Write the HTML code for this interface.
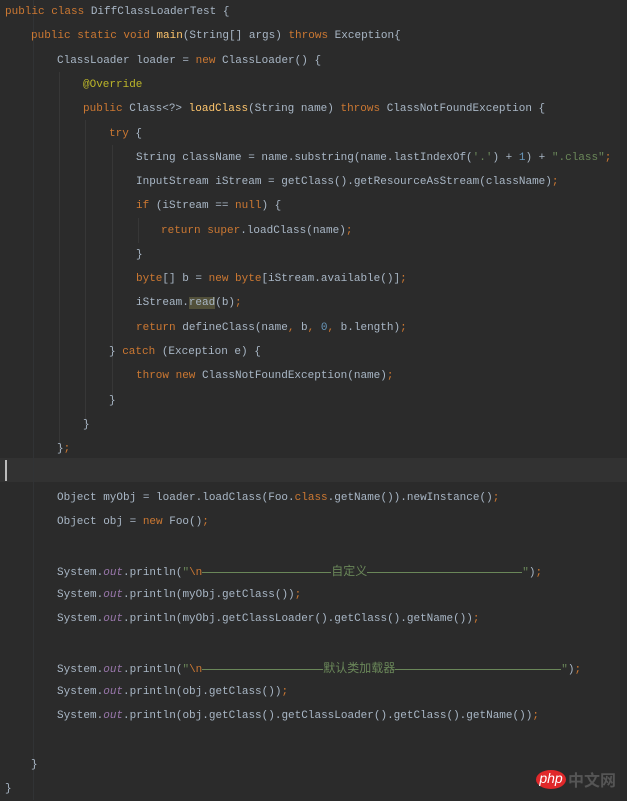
<!DOCTYPE html>
<html><head><meta charset="utf-8"><style>
html,body{margin:0;padding:0}
body{width:627px;height:800px;background:#2b2b2b;position:relative;overflow:hidden;font-family:"Liberation Mono","Noto Sans CJK SC",monospace;font-size:11px;color:#a9b7c6}
.l{position:absolute;left:5px;height:24px;line-height:24px;white-space:pre}
.k{color:#cc7832}.m{color:#ffc66d}.a{color:#bbb529}.s{color:#6a8759}.n{color:#6897bb}.o{color:#9876aa;font-style:italic}
.cur{position:absolute;left:0;top:458px;width:627px;height:24px;background:#323232}
.caret{position:absolute;left:5px;top:460px;width:2px;height:21px;background:#bbb}
.g{position:absolute;width:1px;background:#373737}
.dash{display:inline-block;height:1px;background:#6a8759;vertical-align:middle}
.hl{background:#52503a}
.cj{font-family:"Noto Sans CJK SC",sans-serif;font-size:12px}
</style></head><body>
<div class="cur"></div><div class="caret"></div>
<div class="g" style="left:33px;top:0;height:800px;background:#313335"></div>
<div class="g" style="left:59px;top:72px;height:380px"></div>
<div class="g" style="left:85px;top:120px;height:305px"></div>
<div class="g" style="left:112px;top:145px;height:255px"></div>
<div class="g" style="left:138px;top:218px;height:25px"></div>
<div class="l" style="top:0px"><span class="k">public class </span>DiffClassLoaderTest {</div>
<div class="l" style="top:24px;left:31px"><span class="k">public static void </span><span class="m">main</span>(String[] args) <span class="k">throws </span>Exception{</div>
<div class="l" style="top:49px;left:57px">ClassLoader loader = <span class="k">new </span>ClassLoader() {</div>
<div class="l" style="top:73px;left:83px"><span class="a">@Override</span></div>
<div class="l" style="top:97px;left:83px"><span class="k">public </span>Class&lt;?&gt; <span class="m">loadClass</span>(String name) <span class="k">throws </span>ClassNotFoundException {</div>
<div class="l" style="top:122px;left:109px"><span class="k">try </span>{</div>
<div class="l" style="top:146px;left:136px">String className = name.substring(name.lastIndexOf(<span class="s">'.'</span>) + <span class="n">1</span>) + <span class="s">".class"</span><span class="k">;</span></div>
<div class="l" style="top:170px;left:136px">InputStream iStream = getClass().getResourceAsStream(className)<span class="k">;</span></div>
<div class="l" style="top:194px;left:136px"><span class="k">if </span>(iStream == <span class="k">null</span>) {</div>
<div class="l" style="top:219px;left:161px"><span class="k">return super</span>.loadClass(name)<span class="k">;</span></div>
<div class="l" style="top:243px;left:136px">}</div>
<div class="l" style="top:267px;left:136px"><span class="k">byte</span>[] b = <span class="k">new byte</span>[iStream.available()]<span class="k">;</span></div>
<div class="l" style="top:291px;left:136px">iStream.<span class="hl">read</span>(b)<span class="k">;</span></div>
<div class="l" style="top:316px;left:136px"><span class="k">return </span>defineClass(name<span class="k">, </span>b<span class="k">, </span><span class="n">0</span><span class="k">, </span>b.length)<span class="k">;</span></div>
<div class="l" style="top:340px;left:109px">} <span class="k">catch </span>(Exception e) {</div>
<div class="l" style="top:364px;left:136px"><span class="k">throw new </span>ClassNotFoundException(name)<span class="k">;</span></div>
<div class="l" style="top:389px;left:109px">}</div>
<div class="l" style="top:413px;left:83px">}</div>
<div class="l" style="top:437px;left:57px">}<span class="k">;</span></div>
<div class="l" style="top:486px;left:57px">Object myObj = loader.loadClass(Foo.<span class="k">class</span>.getName()).newInstance()<span class="k">;</span></div>
<div class="l" style="top:510px;left:57px">Object obj = <span class="k">new </span>Foo()<span class="k">;</span></div>
<div class="l" style="top:559px;left:57px">System.<span class="o">out</span>.println(<span class="s">"<span class="k">\n</span><span class="dash" style="width:129px"></span><span class="cj">自定义</span><span class="dash" style="width:155px"></span>"</span>)<span class="k">;</span></div>
<div class="l" style="top:583px;left:57px">System.<span class="o">out</span>.println(myObj.getClass())<span class="k">;</span></div>
<div class="l" style="top:607px;left:57px">System.<span class="o">out</span>.println(myObj.getClassLoader().getClass().getName())<span class="k">;</span></div>
<div class="l" style="top:656px;left:57px">System.<span class="o">out</span>.println(<span class="s">"<span class="k">\n</span><span class="dash" style="width:121px"></span><span class="cj">默认类加载器</span><span class="dash" style="width:166px"></span>"</span>)<span class="k">;</span></div>
<div class="l" style="top:680px;left:57px">System.<span class="o">out</span>.println(obj.getClass())<span class="k">;</span></div>
<div class="l" style="top:704px;left:57px">System.<span class="o">out</span>.println(obj.getClass().getClassLoader().getClass().getName())<span class="k">;</span></div>
<div class="l" style="top:753px;left:31px">}</div>
<div class="l" style="top:777px">}</div>
<div style="position:absolute;left:536px;top:770px;width:30px;height:19px;border-radius:50%;background:#e0282a;color:#fff;font-family:'Liberation Sans',sans-serif;font-size:14px;line-height:17px;text-align:center;font-style:italic">php</div>
<div style="position:absolute;left:568px;top:769px;color:#555;font-family:'Noto Sans CJK SC',sans-serif;font-size:16px;line-height:20px;font-weight:bold">中文网</div>
</body></html>
